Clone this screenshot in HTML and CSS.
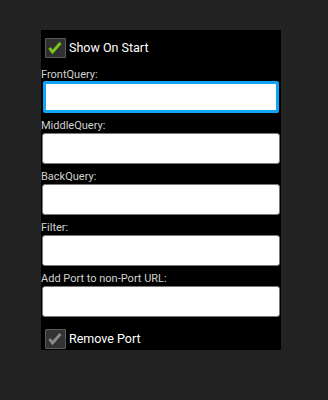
FILE: index.html
```html
<!DOCTYPE html>
<html>
<head>
<meta charset="utf-8">
<link rel="stylesheet" href="styles.css">
</head>
<body>
<div class="panel">
  <div class="check-row">
    <span class="box">
      <svg width="19" height="18" viewBox="0 0 19 18"><path d="M3.5 9 L6.5 13 L14.5 4" fill="none" stroke="#79c71a" stroke-width="2.8" stroke-linecap="butt" stroke-linejoin="miter"/></svg>
    </span>
    <span class="check-label">Show On Start</span>
  </div>
  <div class="label">FrontQuery:</div>
  <div class="input focused"></div>
  <div class="label">MiddleQuery:</div>
  <div class="input"></div>
  <div class="label">BackQuery:</div>
  <div class="input"></div>
  <div class="label">Filter:</div>
  <div class="input"></div>
  <div class="label">Add Port to non-Port URL:</div>
  <div class="input"></div>
  <div class="check-row second">
    <span class="box dim">
      <svg width="19" height="18" viewBox="0 0 19 18"><path d="M3.5 9 L6.5 13 L14.5 4" fill="none" stroke="#8a8a8a" stroke-width="2.8" stroke-linecap="butt" stroke-linejoin="miter"/></svg>
    </span>
    <span class="check-label">Remove Port</span>
  </div>
</div>
</body>
</html>
```
FILE: styles.css
```css
html, body {
  margin: 0;
  padding: 0;
  background: #222222;
  height: 100%;
}
body {
  font-family: Roboto, "Open Sans", sans-serif;
  overflow: hidden;
}
.panel {
  margin: 30px 0 0 41px;
  width: 240px;
  height: 320px;
  background: #000;
  overflow: hidden;
  display: flex;
  flex-direction: column;
}
.check-row {
  display: flex;
  align-items: center;
  padding: 8px 0 4px 4px;
  gap: 3px;
  flex-shrink: 0;
}
.check-row.second {
  padding-top: 12px;
}
.box {
  width: 21px;
  height: 20px;
  box-sizing: border-box;
  border: 1px solid #5c5c5c;
  background: #303030;
  display: flex;
  align-items: center;
  justify-content: center;
  border-radius: 1px;
}
.box.dim {
  background: #333333;
}
.box svg {
  display: block;
  flex-shrink: 0;
}
.check-label {
  color: #fff;
  font-size: 12.5px;
  line-height: 20px;
}
.label {
  color: #d2d2d2;
  font-size: 11px;
  line-height: 14px;
  height: 20px;
  box-sizing: border-box;
  padding-top: 6px;
  white-space: nowrap;
  flex-shrink: 0;
}
.input {
  margin-left: 1px;
  width: 238px;
  height: 31px;
  box-sizing: border-box;
  background: #fff;
  border: 1px solid #7a7a7a;
  border-radius: 3px;
  flex-shrink: 0;
}
.input.focused {
  margin-left: 2px;
  width: 236px;
  height: 32px;
  margin-top: -1px;
  border: 3px solid #0fa4f5;
  border-radius: 2px;
}
```
